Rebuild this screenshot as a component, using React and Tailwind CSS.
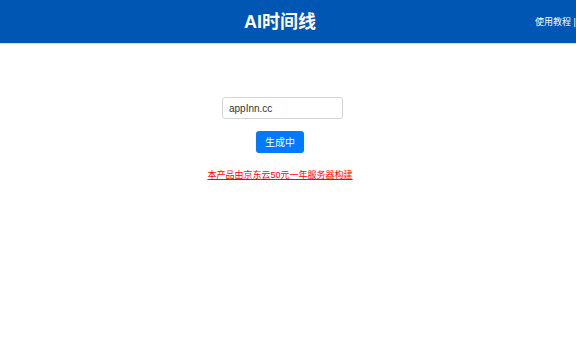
import React from 'react';

const font = { fontFamily: '"Liberation Sans", "Noto Sans CJK SC", sans-serif' };

const App = () => {
  return (
    <div className="min-h-[356px] w-[576px] overflow-hidden bg-white" style={font}>
      {/* Top bar */}
      <header className="relative h-[44px] w-[576px] bg-[#0056b3] border-b border-[#cfe0f3]">
        <div className="flex h-[43px] w-[560px] items-center justify-center">
          <h1 className="text-[18px] font-bold leading-none text-white">AI时间线</h1>
        </div>
        <div className="absolute left-[535px] top-[16px] whitespace-nowrap text-[9px] leading-[12px] text-white">
          使用教程 |
        </div>
      </header>

      {/* Form */}
      <main className="flex w-[560px] flex-col items-center pt-[53px]">
        <input
          className="ml-[5px] h-[22px] w-[121px] rounded-[3px] border border-[#d4d4d4] px-[6px] text-[10px] text-[#333] outline-none"
          defaultValue="appInn.cc"
          readOnly
        />
        <button className="mt-[12px] h-[22px] w-[48px] rounded-[3px] bg-[#007bff] text-[10px] text-white">
          生成中
        </button>
        <a className="mt-[16px] text-[9px] leading-[12px] text-[#ff0000] underline" href="#">
          本产品由京东云50元一年服务器构建
        </a>
      </main>
    </div>
  );
};

export default App;
